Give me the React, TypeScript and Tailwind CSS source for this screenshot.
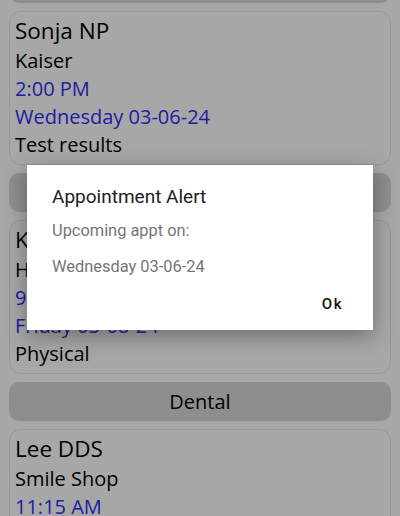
import React from "react"

interface Appt {
  doctor: string
  place: string
  time: string
  date: string
  reason: string
}

interface Group {
  title: string
  appts: Appt[]
}

const groups: Group[] = [
  {
    title: "Medical",
    appts: [
      { doctor: "Sonja NP", place: "Kaiser", time: "2:00 PM", date: "Wednesday 03-06-24", reason: "Test results" },
    ],
  },
  {
    title: "Primary Care",
    appts: [
      { doctor: "Kim MD", place: "Health Center", time: "9:30 AM", date: "Friday 03-08-24", reason: "Physical" },
    ],
  },
  {
    title: "Dental",
    appts: [
      { doctor: "Lee DDS", place: "Smile Shop", time: "11:15 AM", date: "Tuesday 03-12-24", reason: "Cleaning" },
    ],
  },
]

function HeaderBar({ title }: { title: string }) {
  return (
    <div className="h-[39px] rounded-[10px] bg-[#d8d8d8] flex items-center justify-center text-[20px] text-black">
      {title}
    </div>
  )
}

function ApptCard({ appt }: { appt: Appt }) {
  return (
    <div className="rounded-[12px] border border-[#e6e6e6] bg-[#fefefe] px-[5px] pt-[3px] pb-[5px]">
      <div className="text-[22.5px] leading-[32px] text-black">{appt.doctor}</div>
      <div className="text-[20px] leading-[28px] text-black">{appt.place}</div>
      <div className="text-[20px] leading-[28px] text-[#2f2ff5]">{appt.time}</div>
      <div className="text-[20px] leading-[28px] text-[#2f2ff5]">{appt.date}</div>
      <div className="text-[20px] leading-[28px] text-black">{appt.reason}</div>
    </div>
  )
}

export default function App() {
  return (
    <div
      className="relative w-[400px] h-[516px] overflow-hidden bg-[#fdfdfd]"
      style={{ fontFamily: '"Open Sans", sans-serif' }}
    >
      <div className="-mt-[36px] px-[9px] flex flex-col gap-[8px]">
        {groups.map((g) => (
          <React.Fragment key={g.title}>
            <HeaderBar title={g.title} />
            {g.appts.map((a) => (
              <ApptCard key={a.doctor} appt={a} />
            ))}
          </React.Fragment>
        ))}
      </div>

      <div className="absolute inset-0 bg-black/[0.34] flex justify-center items-start pt-[165px]">
        <div
          className="w-[346px] h-[165px] bg-white shadow-[0_6px_20px_rgba(0,0,0,0.35)] pl-[25px] pr-[30px] pt-[20px] flex flex-col"
          style={{ fontFamily: "Roboto, sans-serif" }}
        >
          <div className="text-[19px] leading-[24px] text-[#202020]">Appointment Alert</div>
          <div className="mt-[12px] text-[16.4px] leading-[20px] text-[#757575]">Upcoming appt on:</div>
          <div className="mt-[16px] text-[16.4px] leading-[20px] text-[#757575]">Wednesday 03-06-24</div>
          <div className="mt-[17px] flex justify-end">
            <span className="text-[15px] leading-[20px] font-medium tracking-[0.1em] text-[#111]">Ok</span>
          </div>
        </div>
      </div>
    </div>
  )
}
